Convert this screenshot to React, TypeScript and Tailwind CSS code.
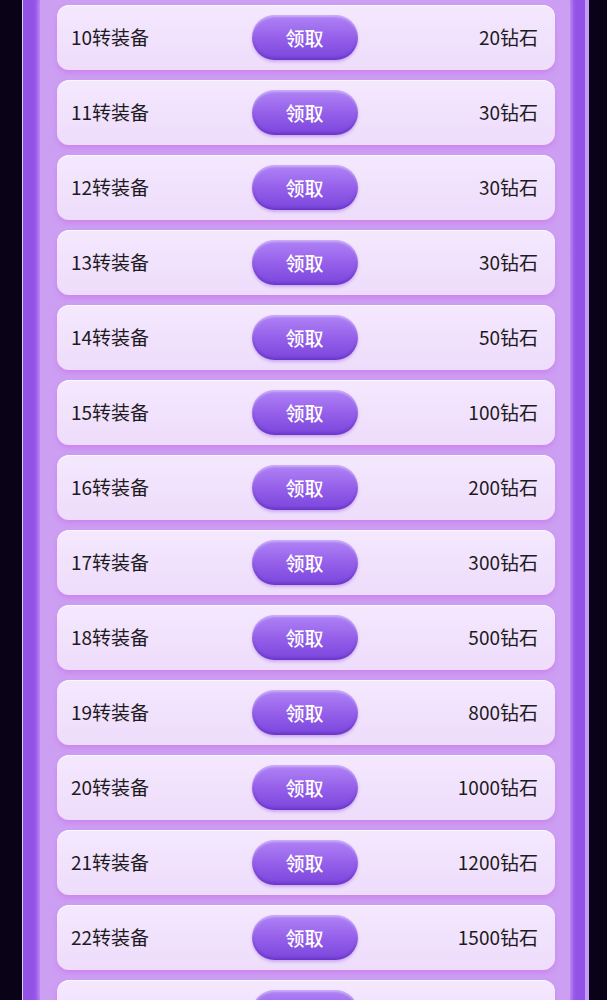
const rows: [number, number][] = [
  [10, 20],
  [11, 30],
  [12, 30],
  [13, 30],
  [14, 50],
  [15, 100],
  [16, 200],
  [17, 300],
  [18, 500],
  [19, 800],
  [20, 1000],
  [21, 1200],
  [22, 1500],
  [23, 2000],
];

function RewardRow({ level, diamonds }: { level: number; diamonds: number }) {
  return (
    <div className="grid h-[65px] shrink-0 grid-cols-[1fr_auto_1fr] items-center rounded-[12px] bg-gradient-to-b from-[#f4e8fe] to-[#eedcfb] pl-[14px] pr-[17px] shadow-[0_3px_5px_rgba(206,110,232,0.55),inset_0_1px_0_rgba(255,255,255,0.7)]">
      <span className="-mt-[2px] text-[19px] leading-none text-[#1d1a22]">{level}转装备</span>
      <button className="h-[45px] w-[106px] rounded-full bg-gradient-to-b from-[#b083f6] via-[#9660ea] to-[#7a45dc] text-[19px] font-medium leading-none text-white shadow-[inset_0_2px_2px_rgba(255,255,255,0.35),inset_0_-2px_3px_rgba(80,30,170,0.4),0_2px_3px_rgba(140,80,220,0.35)]">
        领取
      </button>
      <span className="-mt-[2px] text-right text-[19px] leading-none text-[#1d1a22]">
        {diamonds}钻石
      </span>
    </div>
  );
}

export default function App() {
  return (
    <div
      className="flex h-[1000px] w-[607px] overflow-hidden bg-[#0a0317]"
      style={{ fontFamily: '"Noto Sans CJK SC", "Noto Sans", sans-serif' }}
    >
      <div className="ml-[22px] mr-[18px] flex flex-1 border-l border-r-[4px] border-l-[#e4ccff] border-r-[#c59cf6] bg-gradient-to-r from-[#9252e6] via-[#a56bee] to-[#9252e6] pl-[17px] pr-[15px]">
        <div className="flex flex-1 flex-col gap-[10px] bg-[#cc9ff3] pl-[17px] pr-[15px] pt-[5px] shadow-[0_0_4px_2px_#c193f6]">
          {rows.map(([level, diamonds]) => (
            <RewardRow key={level} level={level} diamonds={diamonds} />
          ))}
        </div>
      </div>
    </div>
  );
}
